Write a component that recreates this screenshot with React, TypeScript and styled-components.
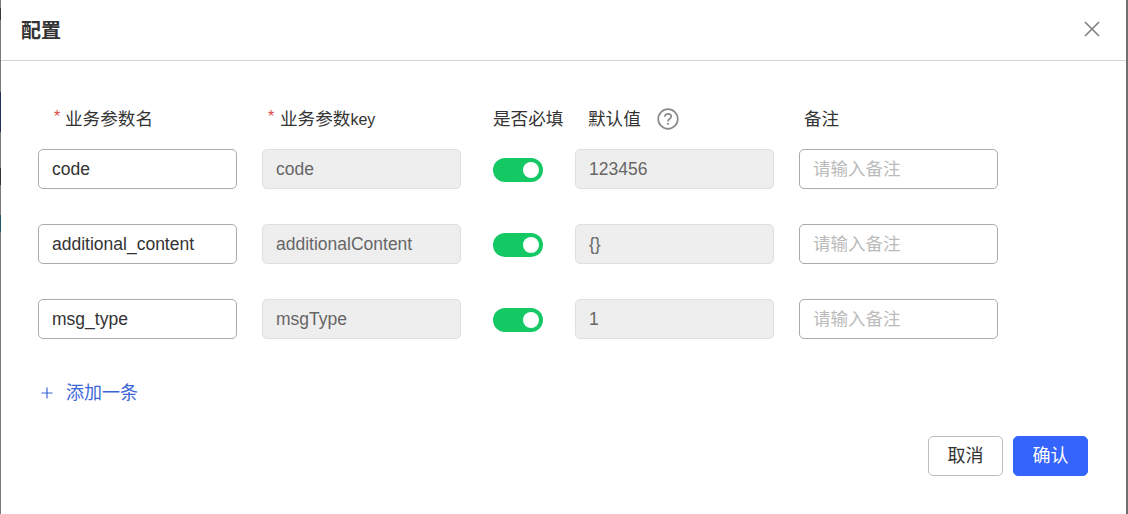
import React from 'react';
import styled, { createGlobalStyle } from 'styled-components';

const GlobalStyle = createGlobalStyle`
  html, body {
    margin: 0;
    padding: 0;
    height: 514px;
    overflow: hidden;
    background: #6f6f6f;
  }
  body, input, button {
    font-family: "Liberation Sans", "Noto Sans CJK SC", sans-serif;
  }
`;

const Page = styled.div`
  display: flex;
  width: 1128px;
  height: 514px;
`;

const LeftEdge = styled.div`
  width: 1px;
  background: linear-gradient(
    to bottom,
    #7a7a7a 0 8px,
    #3a3a3a 8px 20px,
    #7a7a7a 20px 92px,
    #24305f 92px 132px,
    #7a7a7a 132px 168px,
    #333333 168px 185px,
    #7a7a7a 185px 215px,
    #1f5c66 215px 232px,
    #7a7a7a 232px
  );
`;

const Dialog = styled.div`
  width: 1125px;
  height: 514px;
  background: #fff;
  display: flex;
  flex-direction: column;
`;

const Header = styled.header`
  height: 58px;
  flex: none;
  border-bottom: 1px solid #d4d4d4;
  padding: 0 25px 2px 20px;
  display: flex;
  align-items: center;
  justify-content: space-between;
`;

const Title = styled.h2`
  margin: 0;
  font-size: 20px;
  font-weight: 700;
  color: #333;
`;

const CloseButton = styled.button`
  width: 18px;
  height: 18px;
  padding: 0;
  border: 0;
  background: none;
  display: flex;
`;

const Body = styled.div`
  flex: 1;
  padding: 41px 37px 0;
  display: flex;
  flex-direction: column;
`;

const Row = styled.div`
  display: grid;
  grid-template-columns: 199px 199px 64px 199px 199px;
  column-gap: 25px;
  align-items: center;
  height: 40px;
  margin-bottom: 35px;
`;

const LabelRow = styled(Row)`
  height: 30px;
  margin-bottom: 17px;
`;

const Label = styled.div<{ $indent: number }>`
  padding-left: ${(p) => p.$indent}px;
  display: flex;
  align-items: center;
  font-size: 17.6px;
  color: #333;
  white-space: nowrap;
`;

const Star = styled.span<{ $width: number }>`
  color: #e0484a;
  font-size: 16px;
  width: ${(p) => p.$width}px;
  flex: none;
`;

const Latin = styled.span`
  font-size: 16px;
`;

const HelpIcon = styled.svg`
  margin: 3px 0 0 16px;
  flex: none;
`;

const Field = styled.input<{ $locked?: boolean }>`
  box-sizing: border-box;
  width: 199px;
  height: 40px;
  padding: 0 13px;
  font-size: 17.5px;
  border-radius: 5px;
  outline: none;
  border: 1px solid ${(p) => (p.$locked ? '#dfdfdf' : '#ababab')};
  background: ${(p) => (p.$locked ? '#eeeeee' : '#fff')};
  color: ${(p) => (p.$locked ? '#666' : '#333')};

  &::placeholder {
    color: #bbb;
  }
`;

const Toggle = styled.div`
  position: relative;
  width: 50px;
  height: 24px;
  margin: 2px 0 0 7px;
  border-radius: 12px;
  background: #14c864;

  &::after {
    content: "";
    position: absolute;
    top: 4px;
    right: 4px;
    width: 16px;
    height: 16px;
    border-radius: 50%;
    background: #fff;
  }
`;

const AddLink = styled.a`
  display: flex;
  align-items: center;
  margin-top: 5px;
  font-size: 18px;
  line-height: 28px;
  color: #3a66d6;
  gap: 13px;
  padding-left: 3px;
`;

const Footer = styled.footer`
  display: flex;
  justify-content: flex-end;
  gap: 10px;
  padding: 29px 1px 0 0;
`;

const Button = styled.button<{ $primary?: boolean }>`
  width: 75px;
  height: 40px;
  padding: 0 0 4px;
  font-size: 18px;
  border-radius: 5px;
  border: 1px solid ${(p) => (p.$primary ? '#3464fb' : '#bdbdbd')};
  background: ${(p) => (p.$primary ? '#3464fb' : '#fff')};
  color: ${(p) => (p.$primary ? '#fff' : '#333')};
`;

const rows = [
  { name: 'code', key: 'code', value: '123456' },
  { name: 'additional_content', key: 'additionalContent', value: '{}' },
  { name: 'msg_type', key: 'msgType', value: '1' },
];

export default function App() {
  return (
    <React.Fragment>
      <GlobalStyle />
      <Page>
        <LeftEdge />
        <Dialog>
          <Header>
            <Title>配置</Title>
            <CloseButton>
              <svg width="18" height="18" viewBox="0 0 18 18" fill="none" stroke="#808080" strokeWidth="1.6">
                <path d="M2 2L16 16M16 2L2 16" />
              </svg>
            </CloseButton>
          </Header>
          <Body>
            <LabelRow>
              <Label $indent={16}><Star $width={11}>*</Star>业务参数名</Label>
              <Label $indent={6}><Star $width={12}>*</Star><span>业务参数<Latin>key</Latin></span></Label>
              <Label $indent={7}>是否必填</Label>
              <Label $indent={13}>
                默认值
                <HelpIcon width="22" height="22" viewBox="0 0 22 22" fill="none" stroke="#8a8a8a" strokeWidth="1.7">
                  <circle cx="11" cy="11" r="9.8" />
                  <path d="M7.8 8.8C7.8 6.9 9.2 5.8 11 5.8C12.8 5.8 14.2 6.9 14.2 8.6C14.2 10.7 11 10.9 11 13.4" />
                  <path d="M11 15V16.8" />
                </HelpIcon>
              </Label>
              <Label $indent={5}>备注</Label>
            </LabelRow>
            {rows.map((row) => (
              <Row key={row.key}>
                <Field defaultValue={row.name} />
                <Field $locked disabled defaultValue={row.key} />
                <Toggle />
                <Field $locked disabled defaultValue={row.value} />
                <Field placeholder="请输入备注" />
              </Row>
            ))}
            <AddLink>
              <svg width="12" height="12" viewBox="0 0 12 12" fill="none" stroke="#3a66d6" strokeWidth="1.2">
                <path d="M6 0.5V11.5M0.5 6H11.5" />
              </svg>
              添加一条
            </AddLink>
            <Footer>
              <Button>取消</Button>
              <Button $primary>确认</Button>
            </Footer>
          </Body>
        </Dialog>
      </Page>
    </React.Fragment>
  );
}
